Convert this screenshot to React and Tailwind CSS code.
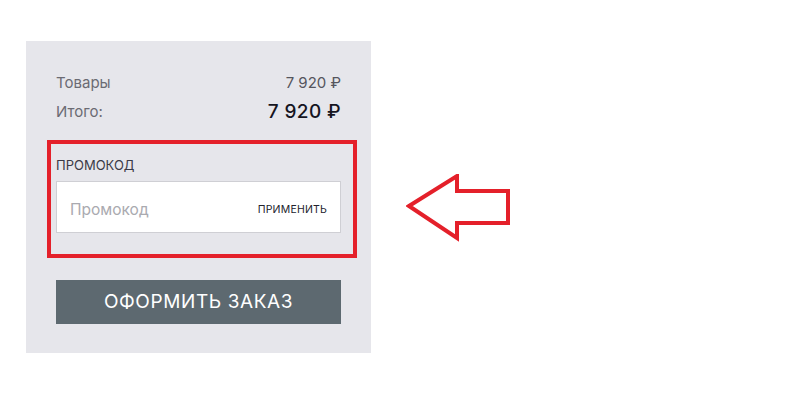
import React from 'react';

const font = { fontFamily: 'Inter, "Open Sans", sans-serif' };

export default function App() {
  return (
    <div className="w-[800px] h-[414px] bg-white flex items-start pt-[41px] pl-[26px]" style={font}>
      {/* Order summary panel */}
      <div className="w-[345px] h-[312px] bg-[#e6e6eb] px-[30px] pt-[31px]">
        <div className="flex justify-between items-center h-[22px] text-[15px] text-[#6b6b73]">
          <span>Товары</span>
          <span className="text-[#55555d]">7 920 ₽</span>
        </div>
        <div className="flex justify-between items-center h-[32px] mt-[2px]">
          <span className="text-[15px] text-[#6b6b73]">Итого:</span>
          <span className="text-[19px] font-medium tracking-[0.4px] text-[#15151f]">7 920 ₽</span>
        </div>

        {/* Promo block */}
        <div className="relative mt-[24px]">
          <div className="absolute left-[-9px] right-[-16px] top-[-12px] h-[118px] border-[4px] border-[#e4202a] pointer-events-none" />
          <div className="text-[13px] text-[#3a3a46] h-[21px] leading-[18px] pt-[4px]">ПРОМОКОД</div>
          <div className="mt-[8px] h-[52px] bg-white border border-[#cfcfd4] flex items-center justify-between pl-[13px] pr-[13px] pt-[5px]">
            <span className="text-[15.5px] text-[#aaaab0]">Промокод</span>
            <span className="text-[10.5px] text-[#22222c] tracking-[0.2px]">ПРИМЕНИТЬ</span>
          </div>
        </div>

        <button className="mt-[47px] w-full h-[44px] bg-[#5d6970] text-white text-[19px] tracking-[0.6px] flex items-center justify-center">
          ОФОРМИТЬ ЗАКАЗ
        </button>
      </div>

      {/* Pointer arrow */}
      <svg className="ml-[35px] mt-[133px]" width="106" height="70" viewBox="0 0 106 70">
        <path
          d="M3 32 L51 2 L51 17 L102 17 L102 49 L51 49 L51 64 Z"
          fill="white"
          stroke="#e4202a"
          strokeWidth="4"
          strokeLinejoin="miter"
        />
      </svg>
    </div>
  );
}
